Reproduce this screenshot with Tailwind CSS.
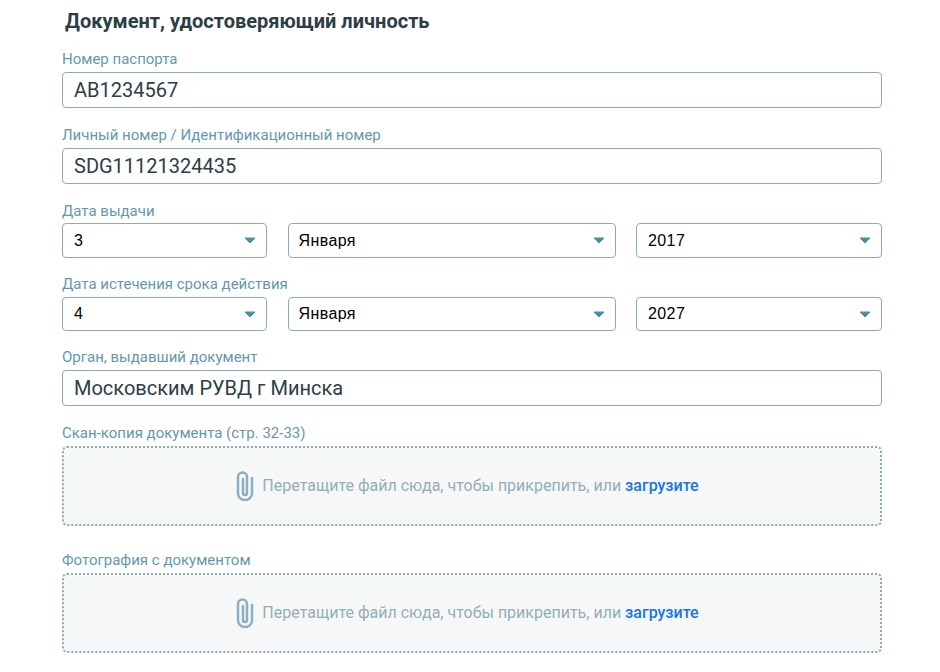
<!DOCTYPE html>
<html lang="ru">
<head>
  <meta charset="UTF-8" />
  <meta name="viewport" content="width=device-width, initial-scale=1.0" />
  <title>Документ</title>
  <script src="https://cdn.jsdelivr.net/npm/@tailwindcss/browser@4"></script>
</head>
<body class="bg-white font-['Roboto',sans-serif] h-[672px] overflow-hidden">
  <div class="w-[820px] ml-[62px] pt-[9px]">
    <h2 class="ml-[3px] h-[24px] text-[20px] leading-[24px] font-bold text-[#2c3e46]">Документ, удостоверяющий личность</h2>

    <label class="block mt-[16px] h-[23px] text-[15px] leading-[20px] text-[#6498ab]">Номер паспорта</label>
    <div class="h-[36px] border border-[#8aacb8] rounded-[4px] px-[11px] text-[20px] leading-[34px] text-[#2c3e46]">AB1234567</div>

    <label class="block mt-[17px] h-[23px] text-[15px] leading-[20px] text-[#6498ab]">Личный номер / Идентификационный номер</label>
    <div class="h-[36px] border border-[#8aacb8] rounded-[4px] px-[11px] text-[20px] leading-[34px] text-[#2c3e46]">SDG11121324435</div>

    <label class="block mt-[17px] h-[22px] text-[15px] leading-[20px] text-[#6498ab]">Дата выдачи</label>
    <div class="grid grid-cols-[205px_328px_246px] justify-between font-['Liberation_Sans',sans-serif] text-[16px] tracking-[0.4px] text-black">
      <div class="h-[35px] border border-[#8aacb8] rounded-[4px] pl-[11px] pr-[10px] flex items-center justify-between"><span>3</span><svg width="12" height="7" viewBox="0 0 12 7"><path d="M1 1h10L6 6z" fill="#4d8fa8" stroke="#4d8fa8" stroke-linejoin="round"/></svg></div>
      <div class="h-[35px] border border-[#8aacb8] rounded-[4px] pl-[10px] pr-[10px] flex items-center justify-between"><span>Января</span><svg width="12" height="7" viewBox="0 0 12 7"><path d="M1 1h10L6 6z" fill="#4d8fa8" stroke="#4d8fa8" stroke-linejoin="round"/></svg></div>
      <div class="h-[35px] border border-[#8aacb8] rounded-[4px] pl-[11px] pr-[10px] flex items-center justify-between"><span>2017</span><svg width="12" height="7" viewBox="0 0 12 7"><path d="M1 1h10L6 6z" fill="#4d8fa8" stroke="#4d8fa8" stroke-linejoin="round"/></svg></div>
    </div>

    <label class="block mt-[16px] h-[23px] text-[15px] leading-[20px] text-[#6498ab]">Дата истечения срока действия</label>
    <div class="grid grid-cols-[205px_328px_246px] justify-between font-['Liberation_Sans',sans-serif] text-[16px] tracking-[0.4px] text-black">
      <div class="h-[34px] border border-[#8aacb8] rounded-[4px] pl-[11px] pr-[10px] flex items-center justify-between"><span>4</span><svg width="12" height="7" viewBox="0 0 12 7"><path d="M1 1h10L6 6z" fill="#4d8fa8" stroke="#4d8fa8" stroke-linejoin="round"/></svg></div>
      <div class="h-[34px] border border-[#8aacb8] rounded-[4px] pl-[10px] pr-[10px] flex items-center justify-between"><span>Января</span><svg width="12" height="7" viewBox="0 0 12 7"><path d="M1 1h10L6 6z" fill="#4d8fa8" stroke="#4d8fa8" stroke-linejoin="round"/></svg></div>
      <div class="h-[34px] border border-[#8aacb8] rounded-[4px] pl-[11px] pr-[10px] flex items-center justify-between"><span>2027</span><svg width="12" height="7" viewBox="0 0 12 7"><path d="M1 1h10L6 6z" fill="#4d8fa8" stroke="#4d8fa8" stroke-linejoin="round"/></svg></div>
    </div>

    <label class="block mt-[16px] h-[23px] text-[15px] leading-[20px] text-[#6498ab]">Орган, выдавший документ</label>
    <div class="h-[36px] border border-[#8aacb8] rounded-[4px] px-[11px] text-[20px] leading-[34px] text-[#2c3e46]">Московским РУВД г Минска</div>

    <label class="block mt-[17px] h-[23px] text-[15px] leading-[20px] text-[#6498ab]">Скан-копия документа (стр. 32-33)</label>
    <div class="h-[80px] bg-[#f6f8f8] border-2 border-dotted border-[#8aacb8] rounded-[5px] flex items-center justify-center gap-[8px] pr-[9px] text-[16px] text-[#93aebb]">
      <svg width="18" height="30" viewBox="0 0 18 30" fill="none" stroke="#8aafc2" stroke-width="2.500" stroke-linecap="round"><path d="M16 7v15.500a7 6.500 0 0 1-14 0V6a4.500 4.500 0 0 1 9 0v16a2 2 0 0 1-4 0V8"/></svg>
      <span>Перетащите файл сюда, чтобы прикрепить, или <a class="font-medium text-[#1a73e8]">загрузите</a></span>
    </div>

    <label class="block mt-[24px] h-[23px] text-[15px] leading-[20px] text-[#6498ab]">Фотография с документом</label>
    <div class="h-[80px] bg-[#f6f8f8] border-2 border-dotted border-[#8aacb8] rounded-[5px] flex items-center justify-center gap-[8px] pr-[9px] text-[16px] text-[#93aebb]">
      <svg width="18" height="30" viewBox="0 0 18 30" fill="none" stroke="#8aafc2" stroke-width="2.500" stroke-linecap="round"><path d="M16 7v15.500a7 6.500 0 0 1-14 0V6a4.500 4.500 0 0 1 9 0v16a2 2 0 0 1-4 0V8"/></svg>
      <span>Перетащите файл сюда, чтобы прикрепить, или <a class="font-medium text-[#1a73e8]">загрузите</a></span>
    </div>
  </div>
</body>
</html>
